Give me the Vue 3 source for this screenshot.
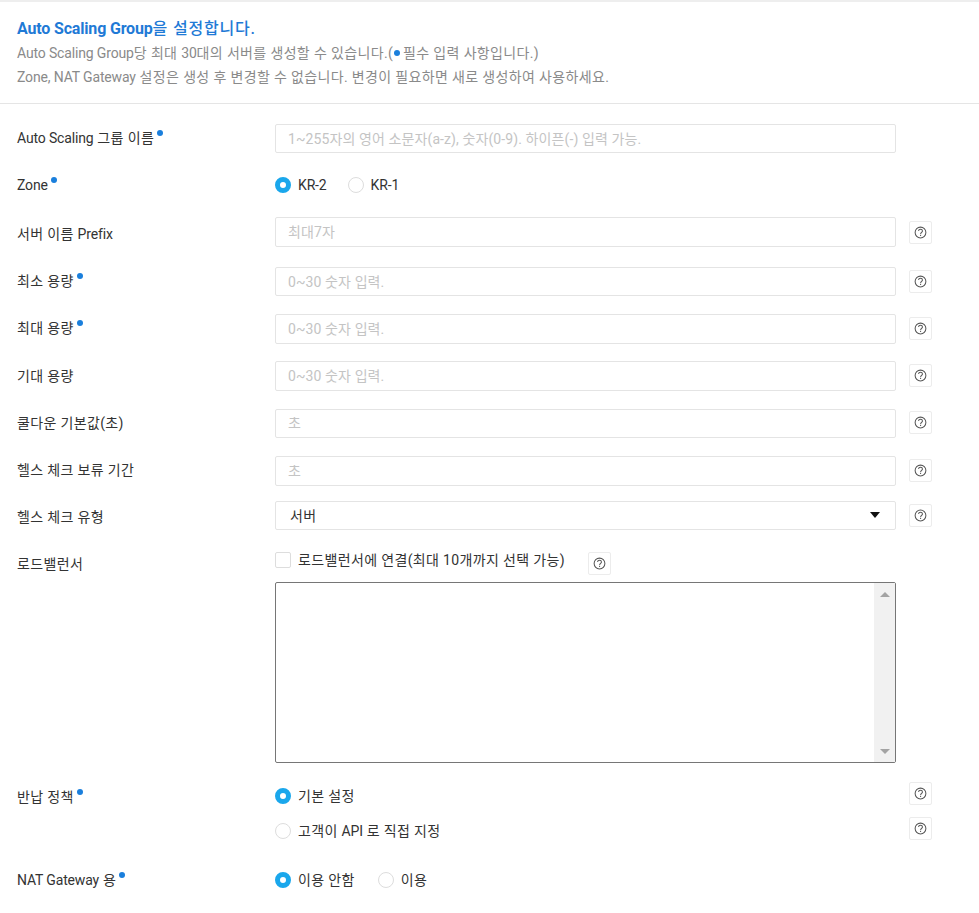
<script setup>
const inputRows = [
  { key: 'min', label: '최소 용량', req: true, ph: '0~30 숫자 입력.' },
  { key: 'max', label: '최대 용량', req: true, ph: '0~30 숫자 입력.' },
  { key: 'want', label: '기대 용량', req: false, ph: '0~30 숫자 입력.' },
  { key: 'cool', label: '쿨다운 기본값(초)', req: false, ph: '초' },
  { key: 'hold', label: '헬스 체크 보류 기간', req: false, ph: '초' },
]
</script>

<template>
  <div class="page">
    <header class="intro">
      <h1 class="title"><strong>Auto Scaling Group</strong>을 설정합니다.</h1>
      <p class="desc"><span class="lat">Auto Scaling Group</span>당 최대 <span class="lat">30</span>대의 서버를 생성할 수 있습니다.(<i class="dot dot-inline"></i>필수 입력 사항입니다.)</p>
      <p class="desc"><span class="lat">Zone, NAT Gateway</span> 설정은 생성 후 변경할 수 없습니다. 변경이 필요하면 새로 생성하여 사용하세요.</p>
    </header>

    <div class="form">
      <div class="row row-name">
        <div class="label"><span class="lat">Auto Scaling</span> 그룹 이름<i class="dot"></i></div>
        <div class="field"><input class="input" placeholder="1~255자의 영어 소문자(a-z), 숫자(0-9). 하이픈(-) 입력 가능." /></div>
      </div>

      <div class="row row-zone">
        <div class="label"><span class="lat">Zone</span><i class="dot"></i></div>
        <div class="field radios">
          <label class="radio"><span class="mark on"></span><span class="lat">KR-2</span></label>
          <label class="radio"><span class="mark"></span><span class="lat">KR-1</span></label>
        </div>
      </div>

      <div class="row row-prefix">
        <div class="label">서버 이름 <span class="lat">Prefix</span></div>
        <div class="field"><input class="input" placeholder="최대7자" /></div>
        <button class="help"><svg viewBox="0 0 14 14" width="13" height="13"><circle cx="7" cy="7" r="5.8" /><path d="M4.9 5.4C5 4.2 5.9 3.6 7 3.6s2.1.7 2.1 1.8c0 1.5-2 1.6-2 3.4" /><path d="M7.1 9.6v1.1" /></svg></button>
      </div>

      <div v-for="r in inputRows" :key="r.key" class="row row-std">
        <div class="label">{{ r.label }}<i v-if="r.req" class="dot"></i></div>
        <div class="field"><input class="input" :placeholder="r.ph" /></div>
        <button class="help"><svg viewBox="0 0 14 14" width="13" height="13"><circle cx="7" cy="7" r="5.8" /><path d="M4.9 5.4C5 4.2 5.9 3.6 7 3.6s2.1.7 2.1 1.8c0 1.5-2 1.6-2 3.4" /><path d="M7.1 9.6v1.1" /></svg></button>
      </div>

      <div class="row row-select">
        <div class="label">헬스 체크 유형</div>
        <div class="field"><div class="select"><span>서버</span><i class="caret"></i></div></div>
        <button class="help"><svg viewBox="0 0 14 14" width="13" height="13"><circle cx="7" cy="7" r="5.8" /><path d="M4.9 5.4C5 4.2 5.9 3.6 7 3.6s2.1.7 2.1 1.8c0 1.5-2 1.6-2 3.4" /><path d="M7.1 9.6v1.1" /></svg></button>
      </div>

      <div class="row row-lb">
        <div class="label lb-label">로드밸런서</div>
        <div class="field lb-field">
          <div class="check-line">
            <label class="check"><span class="box"></span>로드밸런서에 연결(최대 10개까지 선택 가능)</label>
            <button class="help help-inline"><svg viewBox="0 0 14 14" width="13" height="13"><circle cx="7" cy="7" r="5.8" /><path d="M4.9 5.4C5 4.2 5.9 3.6 7 3.6s2.1.7 2.1 1.8c0 1.5-2 1.6-2 3.4" /><path d="M7.1 9.6v1.1" /></svg></button>
          </div>
          <div class="listbox">
            <div class="scrollbar">
              <i class="arrow up"></i>
              <i class="arrow down"></i>
            </div>
          </div>
        </div>
      </div>

      <div class="row row-return">
        <div class="label">반납 정책<i class="dot"></i></div>
        <div class="field"><label class="radio"><span class="mark on"></span>기본 설정</label></div>
        <button class="help help-up"><svg viewBox="0 0 14 14" width="13" height="13"><circle cx="7" cy="7" r="5.8" /><path d="M4.9 5.4C5 4.2 5.9 3.6 7 3.6s2.1.7 2.1 1.8c0 1.5-2 1.6-2 3.4" /><path d="M7.1 9.6v1.1" /></svg></button>
      </div>
      <div class="row row-return2">
        <div class="label"></div>
        <div class="field"><label class="radio"><span class="mark"></span>고객이 <span class="lat">API</span> 로 직접 지정</label></div>
        <button class="help help-up"><svg viewBox="0 0 14 14" width="13" height="13"><circle cx="7" cy="7" r="5.8" /><path d="M4.9 5.4C5 4.2 5.9 3.6 7 3.6s2.1.7 2.1 1.8c0 1.5-2 1.6-2 3.4" /><path d="M7.1 9.6v1.1" /></svg></button>
      </div>

      <div class="row row-nat">
        <div class="label"><span class="lat">NAT Gateway</span> 용<i class="dot"></i></div>
        <div class="field radios radios-nat">
          <label class="radio"><span class="mark on"></span>이용 안함</label>
          <label class="radio"><span class="mark"></span>이용</label>
        </div>
      </div>
    </div>
  </div>
</template>

<style>
html, body { margin: 0; background: #fff; }
</style>

<style scoped>
.page {
  width: 979px;
  height: 913px;
  overflow: hidden;
  box-sizing: border-box;
  border-top: 2px solid #eee;
  font-family: Roboto, "Noto Sans CJK KR", sans-serif;
  font-size: 14px;
  letter-spacing: 0.35px;
  color: #333;
}
.lat { letter-spacing: -0.15px; }
.intro {
  height: 102px;
  box-sizing: border-box;
  padding: 16px 17px 0;
  border-bottom: 1px solid #e5e5e5;
}
.title {
  margin: 0 0 1px;
  font-size: 16px;
  line-height: 22px;
  font-weight: 500;
  letter-spacing: 0.8px;
  color: #1f7ad6;
}
.title strong { font-weight: 700; letter-spacing: -0.17px; }
.desc {
  margin: 0;
  font-size: 14px;
  line-height: 24px;
  color: #8a8a8a;
}
.form { padding-top: 20px; }
.row { display: flex; align-items: center; }
.label {
  width: 275px;
  padding-left: 17px;
  box-sizing: border-box;
  flex: none;
  line-height: 20px;
  color: #333;
}
.field { width: 621px; flex: none; }
.dot {
  display: inline-block;
  width: 6px;
  height: 6px;
  border-radius: 50%;
  background: #1a7fdc;
  vertical-align: 7px;
  margin-left: 3px;
}
.dot-inline { margin: 0 3px 0 1px; vertical-align: 2px; }
.input {
  display: block;
  width: 100%;
  height: 100%;
  box-sizing: border-box;
  border: 1px solid #e4e4e4;
  border-radius: 2px;
  padding: 0 12px;
  font: inherit;
  letter-spacing: 0.1px;
  outline: none;
  background: #fff;
}
.input::placeholder { color: #c4c4c4; opacity: 1; }
.row-name { height: 29px; margin-bottom: 18px; }
.row-name .field { height: 100%; }
.row-name .label { padding-bottom: 2px; }
.row-zone { height: 28px; margin-bottom: 18px; }
.row-prefix { height: 30px; margin-bottom: 19.85px; }
.row-prefix .label { padding-top: 3px; }
.row-std { height: 29.5px; margin-bottom: 17.8px; }
.row-std .label { padding-bottom: 1px; }
.row-std .help { margin-top: -1px; }
.row-prefix .field, .row-std .field { height: 100%; }
.radios { display: flex; gap: 21px; }
.radios-nat { gap: 23px; }
.radio {
  display: inline-flex;
  align-items: center;
  line-height: 20px;
  white-space: pre;
}
.mark {
  width: 16px;
  height: 16px;
  box-sizing: border-box;
  border: 1px solid #ddd;
  border-radius: 50%;
  margin-right: 7px;
  background: #fff;
}
.mark.on { border: 5px solid #1aa7ec; }
.help {
  margin-left: 13px;
  width: 23px;
  height: 23px;
  padding: 0;
  flex: none;
  display: flex;
  align-items: center;
  justify-content: center;
  background: #fff;
  border: 1px solid #ececec;
  border-radius: 2px;
}
.help svg { display: block; fill: none; stroke: #555; stroke-width: 1.1; }
.help-up { margin-top: -7px; }
.row-select { height: 29px; margin-bottom: 22px; margin-top: -2.35px; }
.row-select .label { padding-top: 3px; }
.select {
  height: 29px;
  box-sizing: border-box;
  border: 1px solid #e4e4e4;
  border-radius: 2px;
  padding: 0 15px 0 14px;
  display: flex;
  align-items: center;
  justify-content: space-between;
  color: #333;
}
.select span { padding-bottom: 1px; }
.caret {
  width: 0;
  height: 0;
  border-left: 5px solid transparent;
  border-right: 5px solid transparent;
  border-top: 6px solid #111;
}
.row-lb { align-items: flex-start; margin-bottom: 21px; }
.lb-label { padding-top: 2px; }
.check-line { display: flex; align-items: flex-start; height: 30px; }
.check { display: flex; align-items: center; line-height: 17px; height: 17px; }
.box {
  width: 16px;
  height: 16px;
  box-sizing: border-box;
  border: 1px solid #ddd;
  border-radius: 2px;
  margin-right: 7px;
}
.help-inline { margin-left: 23px; }
.listbox {
  height: 181px;
  box-sizing: border-box;
  border: 1px solid #767676;
  border-radius: 2px;
  display: flex;
  justify-content: flex-end;
}
.scrollbar {
  width: 21px;
  background: #f1f1f1;
  display: flex;
  flex-direction: column;
  justify-content: space-between;
  align-items: center;
  padding: 9px 0 8px;
}
.arrow { width: 0; height: 0; border-left: 5px solid transparent; border-right: 5px solid transparent; }
.arrow.up { border-bottom: 5px solid #a3a3a3; }
.arrow.down { border-top: 5px solid #a3a3a3; }
.row-return { height: 26px; margin-bottom: 9px; }
.row-return2 { height: 26px; margin-bottom: 22px; }
.row-nat { height: 26px; }
</style>
